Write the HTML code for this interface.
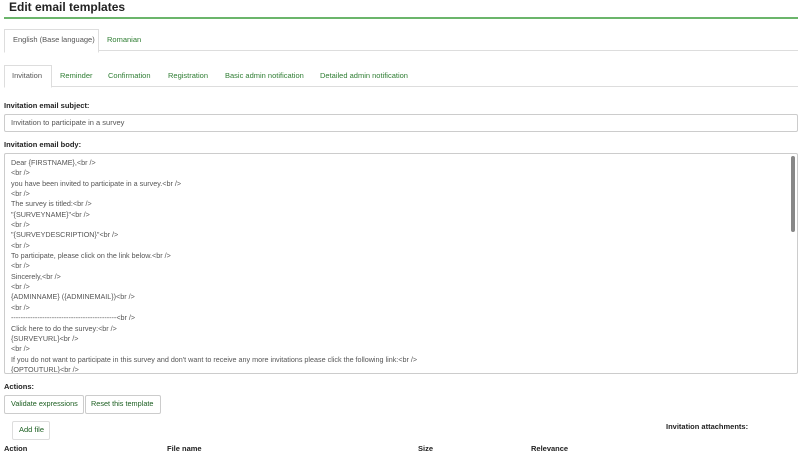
<!DOCTYPE html>
<html><head><meta charset="utf-8"><style>
body{margin:0;width:800px;height:461px;overflow:hidden;background:#fff;font-family:"Liberation Sans",sans-serif;color:#333;position:relative}
.a{position:absolute;white-space:nowrap}
.g{color:#2e7d32}
.tab{position:absolute;font-size:7.5px}
</style></head><body>
<div class="a" style="left:9px;top:0px;font-size:12px;font-weight:bold;color:#222">Edit email templates</div>
<div class="a" style="left:4px;top:17px;width:794px;height:2px;background:#6bb56b"></div>
<div class="a" style="left:4px;top:50px;width:794px;height:1px;background:#ddd"></div>
<div class="a" style="left:4px;top:29px;width:93px;height:22px;border:1px solid #ddd;border-bottom:1px solid #fff;background:#fff"></div>
<div class="tab" style="left:13px;top:35px;color:#555">English (Base language)</div>
<div class="tab g" style="left:107px;top:35px">Romanian</div>
<div class="a" style="left:4px;top:86px;width:794px;height:1px;background:#ddd"></div>
<div class="a" style="left:4px;top:65px;width:46px;height:21px;border:1px solid #ddd;border-bottom:1px solid #fff;background:#fff"></div>
<div class="tab" style="left:12px;top:71px;color:#555">Invitation</div>
<div class="tab g" style="left:60px;top:71px">Reminder</div>
<div class="tab g" style="left:108px;top:71px">Confirmation</div>
<div class="tab g" style="left:168px;top:71px">Registration</div>
<div class="tab g" style="left:225px;top:71px">Basic admin notification</div>
<div class="tab g" style="left:320px;top:71px">Detailed admin notification</div>
<div class="a" style="left:4px;top:101px;font-size:7.5px;font-weight:bold;color:#222">Invitation email subject:</div>
<div class="a" style="left:4px;top:114px;width:792px;height:16px;border:1px solid #ccc;border-radius:2px"></div>
<div class="a" style="left:11px;top:118px;font-size:7.5px;color:#555">Invitation to participate in a survey</div>
<div class="a" style="left:4px;top:140px;font-size:7.5px;font-weight:bold;color:#222">Invitation email body:</div>
<div class="a" style="left:4px;top:153px;width:792px;height:219px;border:1px solid #ccc;border-radius:2px;overflow:hidden">
<div style="position:absolute;right:2px;top:2px;width:4px;height:76px;background:#888;border-radius:2px"></div>
<div style="position:absolute;left:6px;top:4px;font-size:7.2px;line-height:10.35px;color:#555;white-space:pre">Dear {FIRSTNAME},&lt;br /&gt;
&lt;br /&gt;
you have been invited to participate in a survey.&lt;br /&gt;
&lt;br /&gt;
The survey is titled:&lt;br /&gt;
"{SURVEYNAME}"&lt;br /&gt;
&lt;br /&gt;
"{SURVEYDESCRIPTION}"&lt;br /&gt;
&lt;br /&gt;
To participate, please click on the link below.&lt;br /&gt;
&lt;br /&gt;
Sincerely,&lt;br /&gt;
&lt;br /&gt;
{ADMINNAME} ({ADMINEMAIL})&lt;br /&gt;
&lt;br /&gt;
--------------------------------------------&lt;br /&gt;
Click here to do the survey:&lt;br /&gt;
{SURVEYURL}&lt;br /&gt;
&lt;br /&gt;
If you do not want to participate in this survey and don't want to receive any more invitations please click the following link:&lt;br /&gt;
{OPTOUTURL}&lt;br /&gt;</div></div>
<div class="a" style="left:4px;top:382px;font-size:7.5px;font-weight:bold;color:#222">Actions:</div>
<div class="a" style="left:4px;top:395px;width:78px;height:17px;border:1px solid #ccc;border-radius:2px"></div>
<div class="a" style="left:11px;top:399px;font-size:7.3px;color:#1b5e20">Validate expressions</div>
<div class="a" style="left:85px;top:395px;width:74px;height:17px;border:1px solid #ccc;border-radius:2px"></div>
<div class="a" style="left:91px;top:399px;font-size:7.3px;color:#1b5e20">Reset this template</div>
<div class="a" style="left:12px;top:421px;width:36px;height:17px;border:1px solid #ddd;border-radius:2px"></div>
<div class="a" style="left:19px;top:425px;font-size:7.5px;color:#1b5e20">Add file</div>
<div class="a" style="left:666px;top:422px;font-size:7.5px;font-weight:bold;color:#222">Invitation attachments:</div>
<div class="a" style="left:4px;top:444px;font-size:7.5px;font-weight:bold;color:#222">Action</div>
<div class="a" style="left:167px;top:444px;font-size:7.5px;font-weight:bold;color:#222">File name</div>
<div class="a" style="left:418px;top:444px;font-size:7.5px;font-weight:bold;color:#222">Size</div>
<div class="a" style="left:531px;top:444px;font-size:7.5px;font-weight:bold;color:#222">Relevance</div>
</body></html>
